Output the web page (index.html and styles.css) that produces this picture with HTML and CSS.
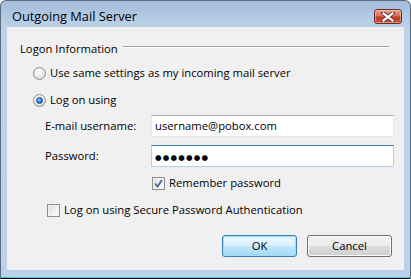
FILE: index.html
```html
<!DOCTYPE html>
<html>
<head>
<meta charset="utf-8">
<link rel="stylesheet" href="styles.css">
</head>
<body>
<div class="window">
  <div class="titlebar">
    <div class="title">Outgoing Mail Server</div>
    <div class="close">
      <svg width="14" height="10" viewBox="0 0 14 10"><path d="M2 1 L12 9 M12 1 L2 9" stroke="#6b3a3a" stroke-width="4" stroke-linecap="square"/><path d="M2.5 1.5 L11.5 8.5 M11.5 1.5 L2.5 8.5" stroke="#ffffff" stroke-width="2.2" stroke-linecap="square"/></svg>
    </div>
  </div>
  <div class="client">
    <div class="group-head"><span class="group-title">Logon Information</span><span class="group-line"></span></div>
    <div class="row radio-row r1"><span class="radio"></span><span>Use same settings as my incoming mail server</span></div>
    <div class="row radio-row r2"><span class="radio checked"><span class="dot"></span></span><span>Log on using</span></div>
    <div class="row field-row f1"><span class="label">E-mail username:</span><div class="input">username@pobox.com</div></div>
    <div class="row field-row f2"><span class="label">Password:</span><div class="input focus"><span class="dots">●●●●●●●</span></div></div>
    <div class="row check-row c1"><span class="check checked"><svg width="9" height="9" viewBox="0 0 9 9"><path d="M1 4.5 L3.5 7.5 L8 1" fill="none" stroke="#4d61a0" stroke-width="1.8"/></svg></span><span>Remember password</span></div>
    <div class="row check-row c2"><span class="check"></span><span>Log on using Secure Password Authentication</span></div>
    <div class="buttons"><div class="btn default">OK</div><div class="btn cancel">Cancel</div></div>
  </div>
  <div class="bottom"></div>
</div>
</body>
</html>
```
FILE: styles.css
```css
html, body { margin: 0; padding: 0; }
body { width: 411px; height: 279px; overflow: hidden; background: #ffffff; font-family: "Open Sans", "Noto Sans", sans-serif; font-size: 11.25px; color: #000; }
.window { width: 411px; height: 279px; box-sizing: border-box; border: 1px solid #5d6b7a; border-bottom: none; border-radius: 6px 6px 0 0; background: linear-gradient(#a3bcd9 0px, #b7cde6 20px, #bdd3ec 30px, #bcd2eb 100%); display: flex; flex-direction: column; overflow: hidden; }
.titlebar { height: 26px; display: flex; align-items: flex-start; justify-content: space-between; }
.title { margin: 7px 0 0 11px; font-size: 12.8px; line-height: 17px; color: #000; }
.close { margin: 8px 8px 0 0; width: 26px; height: 13px; border: 1px solid #6a2a26; border-radius: 3px; background: linear-gradient(#eaa08f 0%, #d9735d 45%, #c23a22 55%, #d2553c 100%); display: flex; align-items: center; justify-content: center; box-shadow: inset 0 0 0 1px rgba(255,255,255,0.35); }
.close svg { display: block; }
.client { margin: 0 6px 0 6px; height: 243px; background: #f0f0f0; position: relative; display: flex; flex-direction: column; }
.row { display: flex; align-items: center; height: 16px; line-height: 16px; }
.group-head { display: flex; align-items: center; height: 16px; margin: 14px 15px 0 13px; }
.group-title { line-height: 16px; }
.group-line { flex: 1; height: 0; border-top: 1px solid #a0a0a0; border-bottom: 1px solid #ffffff; margin-left: 5px; margin-top: -5px; }
.r1 { margin: 8px 0 0 26px; }
.r2 { margin: 11px 0 0 26px; }
.radio { width: 11px; height: 11px; border: 1px solid #8e8f8f; border-radius: 50%; background: radial-gradient(circle at 40% 35%, #ffffff 0%, #e6e6e6 55%, #cfcfcf 100%); margin-right: 4px; display: flex; align-items: center; justify-content: center; box-sizing: content-box; }
.dot { width: 5px; height: 5px; border-radius: 50%; background: radial-gradient(circle at 40% 35%, #8fd0ff 0%, #2c7fd4 55%, #134b8c 100%); border: 1px solid #1b4f8f; }
.field-row { height: 22px; margin-left: 38px; }
.f1 { margin-top: 7px; }
.f2 { margin-top: 8px; }
.label { width: 106px; }
.input { width: 238px; height: 20px; border: 1px solid #e3e9ef; border-top-color: #abadb3; background: #fff; padding-left: 3px; line-height: 20px; box-sizing: content-box; }
.input.focus { border-color: #b5cfe7; border-top-color: #3d7bad; width: 238px; }
.dots { font-family: "DejaVu Sans", sans-serif; font-size: 7.5px; letter-spacing: 1.2px; }
.c1 { margin: 8px 0 0 145px; }
.c2 { margin: 11px 0 0 40px; }
.check { width: 11px; height: 11px; border: 1px solid #8e8f8f; background: linear-gradient(135deg, #dcdcdc, #fdfdfd); margin-right: 4px; box-shadow: inset 0 0 0 1px #f4f4f4; display: flex; align-items: center; justify-content: center; }
.check svg { display: block; }
.buttons { display: flex; justify-content: flex-end; margin: 17px 12px 0 0; gap: 10px; }
.btn { height: 20px; border-radius: 3px; text-align: center; line-height: 20px; box-sizing: content-box; }
.btn.default { width: 73px; border: 1px solid #3c7fb1; background: linear-gradient(#eaf6fd 0%, #d9f0fc 50%, #bee6fd 51%, #a7d9f5 100%); box-shadow: inset 0 0 0 1px #9fe0f7; }
.btn.cancel { width: 83px; border: 1px solid #707070; background: linear-gradient(#f2f2f2 0%, #ebebeb 50%, #dddddd 51%, #cfcfcf 100%); box-shadow: inset 0 0 0 1px #fbfbfb; }
.bottom { flex: 1; border-bottom: 1px solid #000; box-shadow: inset 0 -1px 0 #4ec6d6; }
```
